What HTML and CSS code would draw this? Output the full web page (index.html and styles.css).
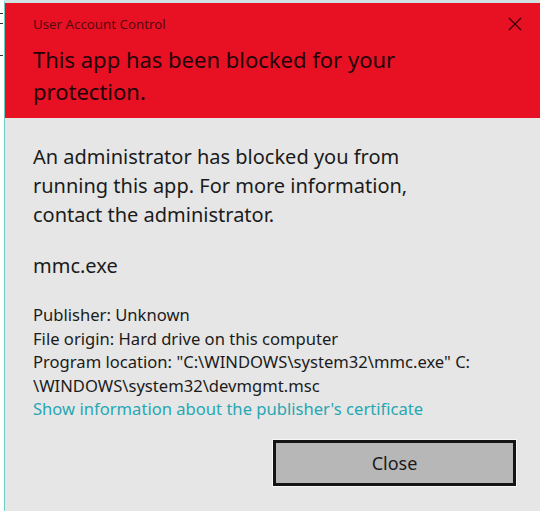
FILE: index.html
```html
<!DOCTYPE html>
<html lang="en">
<head>
<meta charset="utf-8">
<title>User Account Control</title>
<link rel="stylesheet" href="styles.css">
</head>
<body>
<div class="page">
  <div class="behind">
    <span class="mark m1"></span>
    <span class="mark m2"></span>
    <span class="mark m3"></span>
  </div>
  <div class="dialog">
    <div class="header">
      <div class="caption-row">
        <span class="caption">User Account Control</span>
        <svg class="close-x" width="14" height="14" viewBox="0 0 14 14" aria-hidden="true">
          <path d="M1 1 L13 13 M13 1 L1 13" stroke="#3b0308" stroke-width="1.3" fill="none"/>
        </svg>
      </div>
      <h1 class="title">This app has been blocked for your<br>protection.</h1>
    </div>
    <div class="content">
      <p class="message">An administrator has blocked you from<br>running this app. For more information,<br>contact the administrator.</p>
      <p class="appname">mmc.exe</p>
      <div class="details">
        <div>Publisher: Unknown</div>
        <div>File origin: Hard drive on this computer</div>
        <div>Program location: "C:\WINDOWS\system32\mmc.exe" C:<br>\WINDOWS\system32\devmgmt.msc</div>
        <a class="cert-link" href="#">Show information about the publisher's certificate</a>
      </div>
      <div class="actions">
        <button class="btn-close" type="button">Close</button>
      </div>
    </div>
  </div>
</div>
</body>
</html>
```
FILE: styles.css
```css
html, body {
  margin: 0;
  padding: 0;
  background: #ffffff;
}
body {
  width: 540px;
  height: 511px;
  overflow: hidden;
  font-family: "Noto Sans", "Open Sans", sans-serif;
}
.page {
  display: flex;
  height: 511px;
}
.behind {
  width: 4px;
  display: flex;
  flex-direction: column;
  padding-top: 13px;
  box-sizing: border-box;
}
.mark {
  display: block;
  width: 3px;
  height: 1px;
  background: #333;
}
.m1 { margin-bottom: 9px; }
.m2 { margin-bottom: 31px; }
.dialog {
  flex: 1;
  display: flex;
  flex-direction: column;
  border-left: 1px solid #6ccfc4;
  border-top: 3px solid #d3e2e2;
  background: #e6e6e6;
}
.header {
  background: #e81123;
  height: 115px;
  box-sizing: border-box;
  padding: 10px 0 0 28px;
}
.caption-row {
  display: flex;
  align-items: center;
  justify-content: space-between;
  padding-right: 18px;
  height: 22px;
}
.caption {
  font-size: 13.3px;
  color: #5a0810;
}
.close-x {
  display: block;
}
.title {
  margin: 8px 0 0 0;
  font-size: 22px;
  font-weight: normal;
  line-height: 32px;
  color: #22030a;
}
.content {
  flex: 1;
  padding: 24px 0 0 28px;
  color: #1b1b1b;
}
.message {
  margin: 0;
  font-size: 20px;
  line-height: 29px;
}
.appname {
  margin: 22px 0 0 0;
  font-size: 20px;
  line-height: 29px;
}
.details {
  margin-top: 23px;
  font-size: 16.6px;
  line-height: 23.6px;
  display: flex;
  flex-direction: column;
}
.cert-link {
  color: #27a7b3;
  text-decoration: none;
}
.actions {
  display: flex;
  justify-content: flex-end;
  padding-right: 24px;
  margin-top: 19px;
}
.btn-close {
  width: 243px;
  height: 46px;
  background: #b7b7b7;
  border: 3px solid #141414;
  outline: 1px solid #f7f7f7;
  font-family: inherit;
  font-size: 18px;
  color: #1b1b1b;
  padding: 0;
}
```
